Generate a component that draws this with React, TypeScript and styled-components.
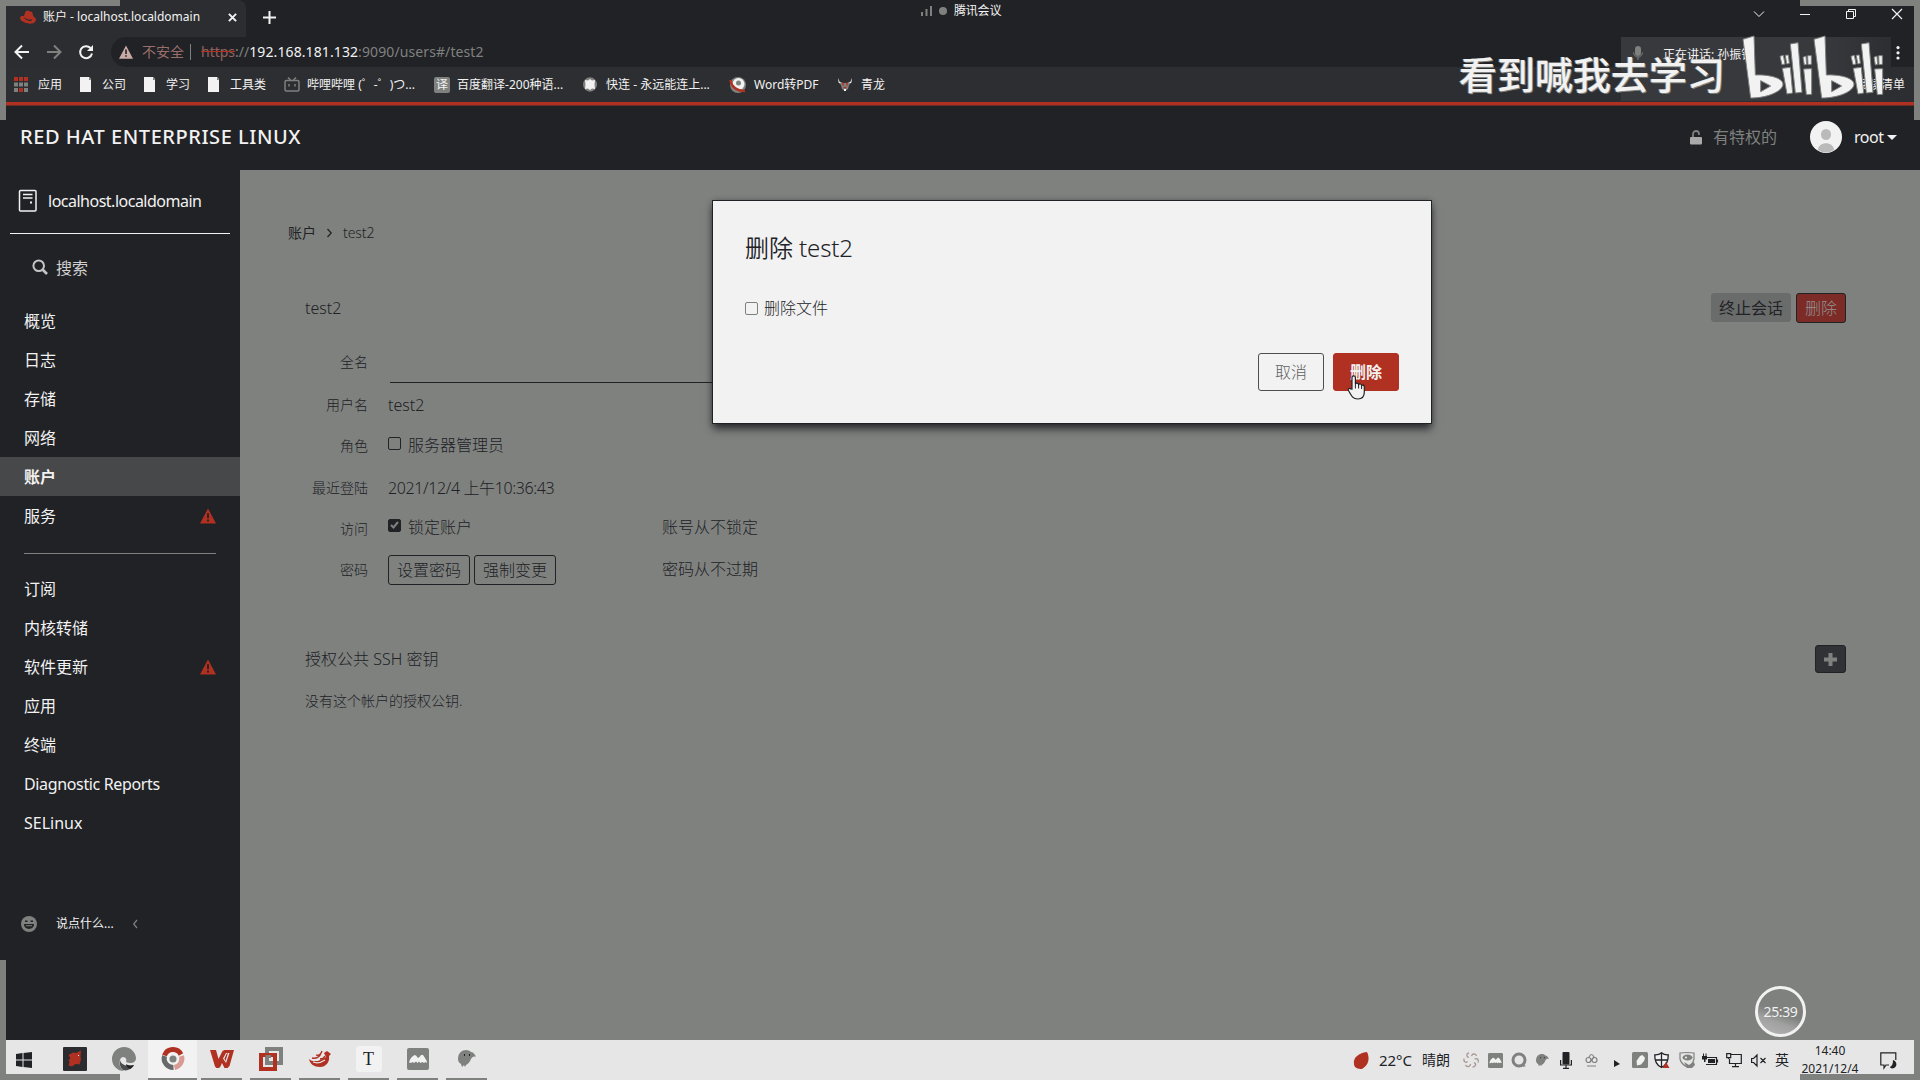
import React from "react";
import styled, { createGlobalStyle } from "styled-components";

const ink = "#212226";
const gray = "#7f817f";
const paper = "#f2f2f2";
const red = "#b03022";

const Global = createGlobalStyle`
  * { box-sizing: border-box; }
  body { margin: 0; overflow: hidden; background: ${ink}; }
`;

const Screen = styled.div`
  position: relative;
  width: 1920px;
  height: 1080px;
  overflow: hidden;
  display: flex;
  flex-direction: column;
  background: ${ink};
  color: ${paper};
  font-family: "Noto Sans", "Noto Sans CJK SC", sans-serif;
  font-size: 16px;
  line-height: 1;
  white-space: nowrap;
`;

const Label = styled.span<{ $size?: number; $color?: string; $weight?: number; $ls?: number; $strike?: boolean }>`
  display: inline-block;
  flex: none;
  line-height: 20px;
  font-size: ${(p) => p.$size ?? 12}px;
  font-weight: ${(p) => p.$weight ?? 400};
  color: ${(p) => p.$color ?? "inherit"};
  letter-spacing: ${(p) => p.$ls ?? 0}px;
  text-decoration: ${(p) => (p.$strike ? `line-through ${red}` : "none")};
`;

const Svg = styled.svg`
  display: block;
  flex: none;
  overflow: visible;
`;

/* ---------- browser window ---------- */

const TabStrip = styled.div`
  height: 37px;
  flex: none;
  display: flex;
  padding-left: 6px;
`;

const Tab = styled.div`
  width: 240px;
  display: flex;
  align-items: center;
  padding: 0 9px 3px 14px;
  gap: 7px;
  background: #2c2d30;
  border-radius: 0 8px 0 0;
`;

const TabTitle = styled(Label)`
  flex: 1;
`;

const NewTab = styled.div`
  padding: 11px 0 0 17px;
  flex: 1;
`;

const WindowButtons = styled.div`
  display: flex;
  gap: 36px;
  padding: 9px 18px 0 0;
`;

const Toolbar = styled.div`
  height: 30px;
  flex: none;
  display: flex;
  align-items: center;
  padding-left: 14px;
  background: #2c2d30;
`;

const NavIcons = styled.div`
  display: flex;
  width: 97px;
  gap: 16px;
`;

const AddressBar = styled.div`
  flex: 1;
  height: 30px;
  display: flex;
  align-items: center;
  padding-left: 8px;
  border-radius: 15px 0 0 15px;
  background: ${ink};
`;

const AddressNote = styled(Label)`
  margin-left: 9px;
`;

const AddressDivider = styled.div`
  width: 1px;
  height: 16px;
  margin: 0 10px 0 6px;
  background: ${gray};
`;

const Bookmarks = styled.div`
  height: 35px;
  flex: none;
  display: flex;
  align-items: center;
  gap: 18px;
  padding-left: 14px;
  background: #2d2e31;
`;

const Bookmark = styled.div<{ $gap?: number; $w?: number }>`
  display: flex;
  align-items: center;
  gap: ${(p) => p.$gap ?? 9}px;
  width: ${(p) => (p.$w ? `${p.$w}px` : "auto")};
`;

const RedRule = styled.div`
  height: 4px;
  flex: none;
  background: ${red};
  border-bottom: 1px solid #6b2a26;
`;

/* ---------- cockpit page ---------- */

const PageHeader = styled.header`
  height: 64px;
  flex: none;
  display: flex;
  align-items: center;
  padding: 0 23px 2px 20px;
`;

const Brand = styled(Label)`
  flex: 1;
`;

const Privileged = styled.div`
  display: flex;
  align-items: center;
  gap: 10px;
  margin-right: 33px;
`;

const RootMenu = styled.div`
  width: 43px;
  display: flex;
  align-items: center;
  justify-content: space-between;
  margin-left: 12px;
`;

const Body = styled.div`
  height: 870px;
  flex: none;
  display: flex;
`;

const Sidebar = styled.nav`
  width: 240px;
  flex: none;
  display: flex;
  flex-direction: column;
`;

const Host = styled.div`
  height: 64px;
  margin: 0 10px;
  padding: 0 0 1px 8px;
  display: flex;
  align-items: center;
  gap: 10px;
  border-bottom: 1px solid ${paper};
`;

const Search = styled.div`
  height: 67px;
  padding: 1px 0 0 32px;
  display: flex;
  align-items: center;
  gap: 8px;
`;

const NavItem = styled.div<{ $active?: boolean }>`
  height: 39px;
  padding: 0 24px;
  display: flex;
  align-items: center;
  justify-content: space-between;
  background: ${(p) => (p.$active ? "#46484a" : "transparent")};
`;

const NavRule = styled.hr`
  border: 0;
  width: 192px;
  height: 1px;
  margin: 18px 24px 15px;
  background: ${gray};
`;

const Chat = styled.div`
  margin-top: 72px;
  padding-left: 21px;
  display: flex;
  align-items: center;
`;

const ChatText = styled(Label)`
  margin: 0 19px;
`;

const Main = styled.main`
  flex: 1;
  background: ${gray};
  color: ${ink};
  padding: 53px 74px 0 48px;
`;

const Breadcrumb = styled.div`
  height: 20px;
  display: flex;
  align-items: center;
  gap: 11px;
`;

const TitleRow = styled.div<{ $top: number }>`
  margin: ${(p) => p.$top}px 0 0 17px;
  height: 32px;
  display: flex;
  align-items: center;
`;

const TitleText = styled(Label)`
  flex: 1;
`;

const Details = styled.div`
  margin-top: 18px;
`;

const DetailRow = styled.div<{ $shift?: number }>`
  height: 41.5px;
  padding-top: ${(p) => Math.max(0, p.$shift ?? 0)}px;
  display: grid;
  grid-template-columns: 80px 254px 1fr;
  column-gap: 20px;
  align-items: center;
`;

const FieldName = styled(Label)`
  text-align: right;
`;

const Field = styled.div<{ $gap?: number; $lift?: number }>`
  display: flex;
  align-items: center;
  gap: ${(p) => p.$gap ?? 7}px;
  padding-bottom: ${(p) => p.$lift ?? 0}px;
`;

const TextInput = styled.div`
  grid-column: 2 / 4;
  width: 700px;
  height: 41px;
  margin-left: 2px;
  border-bottom: 1px solid ${ink};
`;

const Check = styled.span<{ $checked?: boolean; $light?: boolean; $lift?: number }>`
  width: 13px;
  height: 13px;
  flex: none;
  margin-bottom: ${(p) => p.$lift ?? 0}px;
  display: grid;
  place-items: center;
  border: 1px solid ${(p) => (p.$light ? gray : ink)};
  border-radius: 2px;
  background: ${(p) => (p.$checked ? ink : "transparent")};
`;

const Button = styled.button<{ $bg?: string; $fg?: string; $line?: string; $w: number; $h: number; $weight?: number }>`
  width: ${(p) => p.$w}px;
  height: ${(p) => p.$h}px;
  padding: 0 0 2px;
  display: flex;
  align-items: center;
  justify-content: center;
  border: 1px solid ${(p) => p.$line ?? ink};
  border-radius: 3px;
  background: ${(p) => p.$bg ?? "transparent"};
  color: ${(p) => p.$fg ?? ink};
  font-family: inherit;
  font-size: 16px;
  font-weight: ${(p) => p.$weight ?? 300};
`;

const IconButton = styled(Button)`
  padding: 0;
`;

const ButtonPair = styled.div<{ $gap: number }>`
  display: flex;
  gap: ${(p) => p.$gap}px;
`;

const EmptyNote = styled.div`
  margin: 16px 0 0 17px;
`;

const Modal = styled.div`
  position: absolute;
  left: 713px;
  top: 201px;
  width: 718px;
  height: 222px;
  padding: 32px;
  display: flex;
  flex-direction: column;
  background: ${paper};
  color: ${ink};
  box-shadow: 0 0 0 1px ${ink}, 0 6px 8px rgba(20, 20, 24, 0.75), 0 0 6px rgba(20, 20, 24, 0.4);
`;

const ModalTitle = styled.h1`
  margin: 0;
  height: 30px;
  line-height: 30px;
  font-size: 24px;
  font-weight: 350;
  letter-spacing: -0.1px;
`;

const ModalOption = styled.label`
  margin-top: 35px;
  display: flex;
  align-items: center;
  gap: 6px;
`;

const ModalFooter = styled.div`
  margin-top: auto;
  display: flex;
  justify-content: flex-end;
  gap: 9px;
`;

/* ---------- taskbar ---------- */

const Taskbar = styled.div`
  height: 40px;
  flex: none;
  display: flex;
  padding-right: 6px;
  background: #e6e6e6;
  color: ${ink};
`;

const StartSlot = styled.div`
  width: 50px;
  display: flex;
  align-items: center;
  padding-left: 16px;
`;

const TaskApp = styled.div<{ $open?: boolean; $active?: boolean }>`
  width: ${(p) => (p.$open && !p.$active ? 41 : 49)}px;
  margin: 0 ${(p) => (p.$open && !p.$active ? 4 : 0)}px;
  display: flex;
  align-items: center;
  justify-content: center;
  background: ${(p) => (p.$active ? paper : "transparent")};
  border-bottom: 2px solid ${(p) => (p.$open ? gray : "transparent")};
  background-clip: padding-box;
`;

const Tray = styled.div`
  margin-left: auto;
  display: flex;
  align-items: center;
`;

const Weather = styled(Label)`
  margin-left: 10px;
`;

const TrayIcons = styled.div`
  display: flex;
  align-items: center;
  margin-left: 9px;
`;

const TraySlot = styled.div<{ $w?: number }>`
  width: ${(p) => p.$w ?? 24}px;
  display: flex;
  justify-content: center;
`;

const Clock = styled.div`
  width: 66px;
  margin-left: 3px;
  display: flex;
  flex-direction: column;
  align-items: center;
`;

const ClockLine = styled.span`
  font-size: 12px;
  line-height: 18px;
`;

/* ---------- overlays ---------- */

const Corner = styled.div<{ $x: "left" | "right"; $y: "top" | "bottom" }>`
  position: absolute;
  ${(p) => p.$x}: 0;
  ${(p) => p.$y}: 0;
  width: 120px;
  height: 120px;
  border: 0 solid ${gray};
  border-${(p) => p.$x}-width: 6px;
  border-${(p) => p.$y}-width: 6px;
`;

const Float = styled.div<{ $left: number; $top: number }>`
  position: absolute;
  left: ${(p) => p.$left}px;
  top: ${(p) => p.$top}px;
  display: flex;
  align-items: center;
`;

const MeetingTitle = styled(Float)`
  gap: 7px;
`;

const SpeakerPanel = styled(Float)`
  width: 270px;
  height: 64px;
  align-items: flex-start;
  padding: 8px 0 0 12px;
  gap: 20px;
  background: linear-gradient(90deg, #38393c 75%, #2d2e31);
`;

const Watermark = styled(Label)`
  line-height: 44px;
  text-shadow: 1px 1px 0 ${gray}, -1px 0 0 ${gray};
`;

const Timer = styled(Float)`
  width: 51px;
  height: 51px;
  justify-content: center;
  border: 3px solid ${paper};
  border-radius: 50%;
  background: linear-gradient(20deg, #b4b5b4 0%, #a0a1a0 30%, ${gray} 48%);
`;

/* ---------- drawings ---------- */

const FedoraHat = () => (
  <Svg width="16" height="16" viewBox="0 0 16 16">
    <path fill={red} d="M4 7 5.500 2.500 7.500 1.500l2 .8L12 3l1.500 4.500 2 1.500.5 2.500-2 2.500-4 .8-5-1L1 11.500 0 9l1-2z" />
    <path fill="#2c2d30" d="M3.500 7.500c2 2.500 5 3.300 8.500 3l-.5 1.500C8 12 4.500 10.500 3.500 7.500z" />
  </Svg>
);

const Warning = ({ size = 16, fill = red, mark = ink }: { size?: number; fill?: string; mark?: string }) => (
  <Svg width={size} height={size} viewBox="0 0 16 16">
    <path fill={fill} d="M8 0.600 16 15.600H0z" />
    <path stroke={mark} strokeWidth="1.800" d="M8 5.200v5M8 11.600v1.800" />
  </Svg>
);

const Back = () => (
  <Svg width="16" height="16" viewBox="0 0 16 16" fill="none" stroke={paper} strokeWidth="2">
    <path d="M15 8H2M8 1.500 1.500 8 8 14.500" />
  </Svg>
);

const Forward = () => (
  <Svg width="16" height="16" viewBox="0 0 16 16" fill="none" stroke={gray} strokeWidth="2">
    <path d="M1 8h13M8 1.500 14.500 8 8 14.500" />
  </Svg>
);

const Reload = () => (
  <Svg width="16" height="16" viewBox="0 0 16 16">
    <path d="M12.500 4A6 6 0 1 0 14 9.500" fill="none" stroke={paper} strokeWidth="2" />
    <path d="M15 1v6H9z" fill={paper} />
  </Svg>
);

const AppsGrid = () => (
  <Svg width="14" height="15" viewBox="0 0 14 15">
    {[0, 1, 2].map((r) =>
      [0, 1, 2].map((c) => (
        <rect key={`${r}${c}`} x={c * 5} y={r * 5.5} width="4" height="4" fill={r === 0 || (r === 2 && c === 1) ? red : gray} />
      )),
    )}
  </Svg>
);

const PageDoc = () => (
  <Svg width="12" height="15" viewBox="0 0 12 15">
    <path fill={paper} d="M0 0h9l2 2v13H0z" />
    <path fill={gray} d="M9 0l2.500 3H9z" />
  </Svg>
);

const TvIcon = () => (
  <Svg width="16" height="15" viewBox="0 0 16 15" fill="none" stroke={gray} strokeWidth="1.500">
    <rect x="1" y="3.500" width="14" height="10.500" rx="1.500" />
    <path d="M4 .5 6.500 3M12 .5 9.500 3M5 7v2.500M11 7v2.500" />
  </Svg>
);

const TranslateBox = styled.span`
  width: 16px;
  height: 16px;
  display: grid;
  place-items: center;
  border-radius: 2px;
  background: ${gray};
  color: ${paper};
  font-size: 12px;
`;

const Knot = () => (
  <Svg width="14" height="15" viewBox="0 0 14 15">
    <ellipse cx="7" cy="7.500" rx="7" ry="7.200" fill={gray} />
    <path fill={paper} d="M2 3l3 .5L7 2l2 1.500L12 3l-.5 4.500L12 12l-3-.5L7 13l-2-1.500L2 12l.5-4.500z" />
  </Svg>
);

const WordPdf = () => (
  <Svg width="16" height="16" viewBox="0 0 16 16">
    <circle cx="8" cy="8" r="8" fill={gray} />
    <circle cx="8.500" cy="7" r="6" fill={paper} />
    <circle cx="8.500" cy="6" r="2.500" fill={gray} />
    <path d="M.5 3C1 9 6 14 15 14" stroke={red} strokeWidth="2.500" fill="none" />
  </Svg>
);

const Dragon = () => (
  <Svg width="14" height="13" viewBox="0 0 14 13">
    <path fill={gray} d="M0 0l2 4 3 1h4l3-1 2-4v4l-3 3-1 4-3 2-3-2-1-4-3-3z" />
    <path fill={paper} d="M0 0l1.500 4L4 5 1 5zM14 0l-1.500 4L10 5l3 0zM6 11h2v2H6z" />
    <path stroke={red} strokeWidth="1.500" d="M5 4.500v3M9 4.500v3M5.500 9.500h3" />
  </Svg>
);

const ServerIcon = () => (
  <Svg width="20" height="24" viewBox="0 0 20 24" fill="none" stroke={paper} strokeWidth="1.500">
    <rect x="1.500" y="1.500" width="16.500" height="20.500" rx="1" />
    <path d="M5 5.500h9.500M5 9h9.500" />
    <path d="M12 13.500h2" strokeWidth="2" />
  </Svg>
);

const SearchIcon = () => (
  <Svg width="16" height="16" viewBox="0 0 16 16" fill="none" stroke="#c4c5c4" strokeWidth="2">
    <circle cx="6.700" cy="5.700" r="5.300" />
    <path d="M10.500 9.500 15 14" strokeWidth="2.600" />
  </Svg>
);

const Lock = () => (
  <Svg width="13" height="15" viewBox="0 0 13 15">
    <path d="M3 7V4a3 3 0 0 1 6 0v1" stroke={gray} strokeWidth="1.800" fill="none" />
    <rect x="0" y="7" width="12" height="7.500" rx="1" fill="#a8a9a8" />
  </Svg>
);

const Avatar = () => (
  <Svg width="32" height="32" viewBox="0 0 32 32">
    <circle cx="16" cy="16" r="16" fill={paper} />
    <ellipse cx="16" cy="13.500" rx="5" ry="5.500" fill="#b9bab9" />
    <path fill="#b9bab9" d="M8 29c0-9 16-9 16 0q-8 5-16 0z" />
  </Svg>
);

const Smile = () => (
  <Svg width="16" height="16" viewBox="0 0 16 16">
    <circle cx="8" cy="8" r="8" fill={gray} />
    <path fill={ink} d="M3 8h10c0 6.500-10 6.500-10 0zM4 4.500h2.500V6H4zM9.500 4.500H12V6H9.500z" />
    <path fill={gray} d="M5 9.200h6v1H5z" />
  </Svg>
);

const Bilibili = () => (
  <Svg width="165" height="75" viewBox="0 0 495 225">
    <g stroke={gray} strokeWidth="3" fill={paper} strokeLinejoin="round">
      {[0, 213].map((dx) => (
        <g key={dx} transform={`translate(${dx} 0)`}>
          <path
            fillRule="evenodd"
            d="M39 28 72 18l4 117c38-2 82 8 83 27 0 22-46 42-97 42zM92 152v33l30-17z"
          />
          <path d="M181 42l23-4 12 149-20 2zM157 115l24-3 7 77-17 3zM221 117l24-1v77l-16 1z" />
          <path d="M150 79l10-3 5 26-9 2zM166 76l9-1 3 25-8 2zM219 82l9-4 2 25-7 2zM233 77h11v26l-10 1z" />
        </g>
      ))}
    </g>
  </Svg>
);

const HandCursor = () => (
  <Svg width="18" height="25" viewBox="0 0 18 25">
    <path
      d="M5 14V2.500a1.700 1.700 0 0 1 3.400 0V9c.4-1.400 3-1.200 3.200.6.6-1.100 2.800-.8 3 .9.800-.9 2.700-.4 2.700 1.300v5.500c0 4-2 6.700-6.500 6.700-5 0-6.300-3-9.300-8.500-1-2 1-2.800 2-1.600z"
      fill={paper}
      stroke={ink}
      strokeWidth="1.200"
    />
    <path d="M8.400 9v4.500M11.600 10v3.500M14.600 11v3" stroke={ink} strokeWidth="1" />
  </Svg>
);

const Windows = () => (
  <Svg width="16" height="16" viewBox="0 0 16 16" fill={ink}>
    <path d="M0 2l6.500-1v6.500H0zM7.500.9 16 0v7.500H7.500zM0 8.500h6.500V15L0 14zM7.500 8.500H16V16l-8.500-1z" />
  </Svg>
);

const SublimeIcon = () => (
  <Svg width="24" height="24" viewBox="0 0 24 24">
    <rect width="24" height="24" rx="1" fill="#2b2c30" />
    <path fill={red} d="M5.500 8 10 5.500l3 .5 5-2.500-.5 6 .5 3-1.500 5-4-.5L9 19.500l-3.500-1 1-3.500-1-2 2-1.500z" />
    <path fill={paper} d="M15 8h1v1h-1z" />
  </Svg>
);

const Edge = () => (
  <Svg width="24" height="24" viewBox="0 0 24 24">
    <path fill={gray} d="M12 0a12 12 0 0 1 12 11c0 4-3 5-6 5-3 0-4-1-4-2 1-1 0-4-3-4-5 1-5 10 1 14A12 12 0 0 1 12 0z" />
    <path fill="#4a4c4e" d="M8 12c0 5 5 8 14 6-3 5-9 7-12 4-2-2-3-6-2-10z" />
    <path fill={ink} d="M14 17c2 1.500 5 2 8 1-1 2-3 3.500-4 4-2-1-4-3-4-5z" />
  </Svg>
);

const Chrome = () => (
  <Svg width="22" height="22" viewBox="0 0 22 22" fill="none" strokeWidth="5">
    <path d="M2.500 7.500a9 9 0 0 1 16.500-1" stroke={red} />
    <path d="M19.500 8a9 9 0 0 1-7 11.500" stroke="#d99a93" />
    <path d="M2.500 8a9 9 0 0 0 9 11.500" stroke="#66686a" />
    <circle cx="11" cy="11" r="4.300" fill={gray} stroke={paper} strokeWidth="1.500" />
  </Svg>
);

const Wps = () => (
  <Svg width="24" height="18" viewBox="0 0 24 18">
    <path fill={red} d="M0 0h6l2.500 9L12.500 1l2-1H24l-4.500 16-2 2h-3L12 13l-1.500 3.500L9 18H6.500L5 16.500z" />
    <path fill="#e6e6e6" d="M13 8.500 16 3h3.500L16 13z" />
    <path fill={red} d="M14.500 8.500 16.500 4 18 3l-2.500 8z" />
  </Svg>
);

const VmWare = () => (
  <Svg width="24" height="24" viewBox="0 0 24 24" fill="none" strokeWidth="4">
    <rect x="8" y="2" width="14" height="14" stroke={gray} />
    <rect x="2" y="8" width="14" height="14" stroke={red} />
    <path d="M8 12V9.500h4" stroke={gray} strokeWidth="3" />
  </Svg>
);

const Swirl = () => (
  <Svg width="22" height="18" viewBox="0 0 22 18">
    <path fill={red} d="M0 9c3 3 6 2 9 2l8-4-2-4 3-2 4 3-2 2c1 6-3 11-9 11C5 17 1 14 0 9z" />
    <path fill="none" stroke={red} strokeWidth="1.300" d="M3 8c4 1 8-1 9-5M7 5c3 1 5-1 6-4M11 9c2 0 4-1 5-3" />
    <path fill="none" stroke="#e6e6e6" strokeWidth="1.200" d="M4 12c5 2 9 0 12-2" />
  </Svg>
);

const TyporaBox = styled.span`
  width: 26px;
  height: 26px;
  display: grid;
  place-items: center;
  border-radius: 3px;
  background: ${paper};
  font-family: "Liberation Serif", serif;
  font-size: 18px;
`;

const Mountain = ({ size = 22 }: { size?: number }) => (
  <Svg width={size} height={size} viewBox="0 0 22 22">
    <rect width="22" height="22" rx="2" fill={gray} />
    <path
      fill={paper}
      d="M2 15c.5-3 2-5.500 3.500-6.500L7.500 7l1.500.5 2 2.500 2-1.500L14 7h2l2 3c1 1.500 2 3 2 5l-1.500-1-1.500 1-1.500-1-2 1-1.500-1.500L10.500 15 9 13.500 7 15l-1.500-1L4 15l-1-.5z"
    />
  </Svg>
);

const Bird = ({ size = 18 }: { size?: number }) => (
  <Svg width={size} height={size} viewBox="0 0 18 18">
    <path fill={gray} d="M0 9C0 3 4 0 8 0c3 0 4 1 5 2 2 0 4 2 5 5-2-1-4 0-5 2-1 3-3 5-5 6l-1 2-1-2-2 2-1-3C1 13 0 11 0 9z" />
    <path fill={ink} d="M6 4h1v2H6zM11 4h1v2h-1z" />
  </Svg>
);

const tray = {
  weather: (
    <Svg width="16" height="17" viewBox="0 0 16 17">
      <path fill={red} d="M1 12C0 6 5 1 14 0c3 6 2 13-5 17-4 0-8-1-8-5z" />
    </Svg>
  ),
  flower: (
    <Svg width="16" height="16" viewBox="0 0 16 16" fill="none" stroke="#a5928f" strokeWidth="1.200">
      <path d="M6 5.500C3 5 3 1.500 6 .8M8.500 4C9.500 1 13 1.500 13.500 4M11.500 7c3-1.500 4.500 1 3.500 3.500M11 10.500c3 1.500 1.500 4.500-1.500 4.700M7.500 12c-.5 3.500-4 3-5 1M4.500 9.500C2 11.500.5 9 1 6.500" />
    </Svg>
  ),
  ring: (
    <Svg width="16" height="16" viewBox="0 0 16 16">
      <circle cx="8" cy="8" r="6" fill="none" stroke={gray} strokeWidth="3" />
      <path fill={gray} d="M11 12l4 2-3 1z" />
    </Svg>
  ),
  mic: (
    <Svg width="12" height="17" viewBox="0 0 12 17">
      <rect x="2.500" width="7" height="12.500" rx="1" fill={ink} />
      <path d="M.6 8v5h10.800V8M6 13v3.500M3 16.300h6" stroke={ink} strokeWidth="1.200" fill="none" />
    </Svg>
  ),
  cloud: (
    <Svg width="13" height="14" viewBox="0 0 13 14" fill="none" stroke={gray} strokeWidth="1.200">
      <circle cx="3.500" cy="7" r="2.500" />
      <circle cx="9.500" cy="7" r="2.500" />
      <path d="M4 4q2.500-5 5 0L5 9M2 13h9" />
    </Svg>
  ),
  pointer: (
    <Svg width="6" height="13" viewBox="0 0 6 13">
      <path fill={ink} d="M0 6l6 4-6 3z" />
    </Svg>
  ),
  penBox: (
    <Svg width="16" height="16" viewBox="0 0 16 16">
      <rect width="16" height="16" rx="1.500" fill={gray} />
      <path fill={paper} d="M4.500 9 8 4l2.500-1L13 6l-1 3-3 3.500-4 1z" />
    </Svg>
  ),
  shield: (
    <Svg width="16" height="17" viewBox="0 0 16 17">
      <path
        d="M7.500.8Q10 3 14.200 2.800C14.500 9 12 13.500 7.500 15.500 3 13.500.5 9 .8 2.800 5 3 7.500.8 7.500.8zM7.500 1v14M1 8h13"
        fill={paper}
        stroke={ink}
        strokeWidth="1.300"
      />
      <path fill={red} d="M12 10l3.500 6h-7z" />
    </Svg>
  ),
  face: (
    <Svg width="16" height="16" viewBox="0 0 16 16">
      <path d="M1 1q7-1 14 0v6c-1 4-3 7-7 8-4-2-6-4-7-8z" fill="none" stroke={gray} strokeWidth="1.200" />
      <ellipse cx="8.500" cy="5.500" rx="5" ry="3" fill={gray} />
      <path fill={gray} d="M5 10l5 3 5-3 1 3-3 3H8z" />
      <circle cx="7" cy="5.500" r="1" fill={paper} />
    </Svg>
  ),
  battery: (
    <Svg width="16" height="14" viewBox="0 0 16 14">
      <path d="M5 4.500h9.500v7H4M15.500 6.500v3" stroke={ink} fill="none" strokeWidth="1.200" />
      <path fill={ink} d="M6 6h7v4H6zM0 3h5v3.500H3.500V9H2V6.500H0zM1 .5h1V3H1zM3.500.5h1V3h-1z" />
    </Svg>
  ),
  monitor: (
    <Svg width="16" height="15" viewBox="0 0 16 15" fill="none" stroke={ink} strokeWidth="1.200">
      <path d="M5 1.500h10.300v9H3.500V6M9.500 10.500v3M6 13.700h7" />
      <path d="M.7.7h4v4h-4zM2.700 4.700V6" />
    </Svg>
  ),
  muted: (
    <Svg width="15" height="13" viewBox="0 0 15 13" fill="none" stroke={ink} strokeWidth="1.200">
      <path d="M.6 4.500h2L6 1v11L2.600 8.500h-2zM9.500 4l5 5M14.500 4l-5 5" />
    </Svg>
  ),
  notes: (
    <Svg width="17" height="17" viewBox="0 0 17 17">
      <path d="M9 13H6l-2 3v-3H.8V.8h15V8" fill="none" stroke={ink} strokeWidth="1.200" />
      <path fill={ink} d="M13 8c3 1 4 4 3 6-1 3-6 3-6 1 2-1 3-3 3-7z" />
    </Svg>
  ),
};

interface NavEntryData {
  t: string;
  active?: boolean;
  warn?: boolean;
  ls?: number;
}

const navTop: NavEntryData[] = [
  { t: "概览" },
  { t: "日志" },
  { t: "存储" },
  { t: "网络" },
  { t: "账户", active: true },
  { t: "服务", warn: true },
];
const navBottom: NavEntryData[] = [
  { t: "订阅" },
  { t: "内核转储" },
  { t: "软件更新", warn: true },
  { t: "应用" },
  { t: "终端" },
  { t: "Diagnostic Reports", ls: -0.35 },
  { t: "SELinux" },
];

const NavEntry = ({ item }: { item: NavEntryData }) => (
  <NavItem $active={item.active}>
    <Label $size={16} $weight={item.active ? 700 : 400} $ls={item.ls}>
      {item.t}
    </Label>
    {item.warn && <Warning />}
  </NavItem>
);

export default function App() {
  return (
    <Screen>
      <Global />

      <TabStrip>
        <Tab>
          <FedoraHat />
          <TabTitle $size={12}>账户 - localhost.localdomain</TabTitle>
          <Svg width="9" height="9" viewBox="0 0 10 10" stroke={paper} strokeWidth="2.200">
            <path d="M1 1l8 8M9 1 1 9" />
          </Svg>
        </Tab>
        <NewTab>
          <Svg width="13" height="13" viewBox="0 0 13 13" stroke={paper} strokeWidth="2">
            <path d="M6.500 0v13M0 6.500h13" />
          </Svg>
        </NewTab>
        <WindowButtons>
          <Svg width="10" height="10" viewBox="0 0 10 10" fill="none" stroke={paper}>
            <path d="M0 2.500 5 7.500l5-5" />
          </Svg>
          <Svg width="10" height="10" viewBox="0 0 10 10" stroke={paper}>
            <path d="M0 5.500h10" />
          </Svg>
          <Svg width="10" height="10" viewBox="0 0 10 10" fill="none" stroke={paper}>
            <path d="M.5 2.500h7v7h-7zM2.500 2.500v-2h7v7h-2" />
          </Svg>
          <Svg width="10" height="10" viewBox="0 0 10 10" stroke={paper} strokeWidth="1.200">
            <path d="M0 0l10 10M10 0 0 10" />
          </Svg>
        </WindowButtons>
      </TabStrip>

      <Toolbar>
        <NavIcons>
          <Back />
          <Forward />
          <Reload />
        </NavIcons>
        <AddressBar>
          <Warning size={14} fill="#c9aaa6" mark={ink} />
          <AddressNote $size={14} $color="#9a6f6b">
            不安全
          </AddressNote>
          <AddressDivider />
          <Label $size={14} $color="#93625d" $strike>
            https
          </Label>
          <Label $size={14} $color={gray}>
            ://
          </Label>
          <Label $size={14} $ls={0.1}>
            192.168.181.132
          </Label>
          <Label $size={14} $color={gray} $ls={0.1}>
            :9090/users#/test2
          </Label>
        </AddressBar>
      </Toolbar>

      <Bookmarks>
        <Bookmark $gap={10}>
          <AppsGrid />
          <Label>应用</Label>
        </Bookmark>
        <Bookmark $gap={10}>
          <PageDoc />
          <Label>公司</Label>
        </Bookmark>
        <Bookmark $gap={10}>
          <PageDoc />
          <Label>学习</Label>
        </Bookmark>
        <Bookmark $gap={10}>
          <PageDoc />
          <Label>工具类</Label>
        </Bookmark>
        <Bookmark $w={132} $gap={7}>
          <TvIcon />
          <Label>哔哩哔哩 (゜-゜)つ...</Label>
        </Bookmark>
        <Bookmark $w={131} $gap={7}>
          <TranslateBox>译</TranslateBox>
          <Label>百度翻译-200种语...</Label>
        </Bookmark>
        <Bookmark $w={129}>
          <Knot />
          <Label>快连 - 永远能连上...</Label>
        </Bookmark>
        <Bookmark $w={90} $gap={8}>
          <WordPdf />
          <Label>Word转PDF</Label>
        </Bookmark>
        <Bookmark>
          <Dragon />
          <Label>青龙</Label>
        </Bookmark>
      </Bookmarks>
      <RedRule />

      <PageHeader>
        <Brand $size={20} $weight={500} $ls={0.55}>
          RED HAT ENTERPRISE LINUX
        </Brand>
        <Privileged>
          <Lock />
          <Label $size={16} $color={gray}>
            有特权的
          </Label>
        </Privileged>
        <Avatar />
        <RootMenu>
          <Label $size={16} $ls={-0.5}>
            root
          </Label>
          <Svg width="10" height="5" viewBox="0 0 10 5">
            <path fill={paper} d="M0 0h10L5 5z" />
          </Svg>
        </RootMenu>
      </PageHeader>

      <Body>
        <Sidebar>
          <Host>
            <ServerIcon />
            <Label $size={16} $ls={-0.5}>
              localhost.localdomain
            </Label>
          </Host>
          <Search>
            <SearchIcon />
            <Label $size={16} $color="#d0d0d0">
              搜索
            </Label>
          </Search>
          {navTop.map((n) => (
            <NavEntry key={n.t} item={n} />
          ))}
          <NavRule />
          {navBottom.map((n) => (
            <NavEntry key={n.t} item={n} />
          ))}
          <Chat>
            <Smile />
            <ChatText $size={12}>说点什么...</ChatText>
            <Svg width="4" height="8" viewBox="0 0 4 8" fill="none" stroke={gray} strokeWidth="1.200">
              <path d="M4 0 .7 4 4 8" />
            </Svg>
          </Chat>
        </Sidebar>

        <Main>
          <Breadcrumb>
            <Label $size={14}>账户</Label>
            <Svg width="5" height="8" viewBox="0 0 5 8" fill="none" stroke={ink} strokeWidth="1.200">
              <path d="M.5 0 4.200 4 .5 8" />
            </Svg>
            <Label $size={14} $weight={300} $ls={-0.1}>
              test2
            </Label>
          </Breadcrumb>

          <TitleRow $top={49}>
            <TitleText $size={16} $weight={300}>
              test2
            </TitleText>
            <ButtonPair $gap={5}>
              <Button $w={80} $h={29} $bg="#6a6c6b" $line="#6a6c6b" $weight={400}>
                终止会话
              </Button>
              <Button $w={50} $h={30} $bg="#7c2b27" $fg="#929492">
                删除
              </Button>
            </ButtonPair>
          </TitleRow>

          <Details>
            <DetailRow>
              <Field $lift={2}>
                <LongName $size={14} $weight={300}>
                  全名
                </LongName>
              </Field>
              <TextInput />
            </DetailRow>
            <DetailRow $shift={2}>
              <FieldName $size={14} $weight={300}>
                用户名
              </FieldName>
              <Label $size={16} $weight={300}>
                test2
              </Label>
            </DetailRow>
            <DetailRow $shift={1}>
              <FieldName $size={14} $weight={300}>
                角色
              </FieldName>
              <Field $lift={3}>
                <Check $lift={3} />
                <Label $size={16} $weight={300}>
                  服务器管理员
                </Label>
              </Field>
            </DetailRow>
            <DetailRow $shift={1}>
              <FieldName $size={14} $weight={300}>
                最近登陆
              </FieldName>
              <Label $size={16} $weight={300} $ls={-0.38}>
                2021/12/4 上午10:36:43
              </Label>
            </DetailRow>
            <DetailRow>
              <FieldName $size={14} $weight={300}>
                访问
              </FieldName>
              <Field $lift={4}>
                <Check $checked $lift={3}>
                  <Svg width="9" height="8" viewBox="0 0 9 8" fill="none" stroke={gray} strokeWidth="2">
                    <path d="M1 4l2.500 2.500L8 1" />
                  </Svg>
                </Check>
                <Label $size={16} $weight={300}>
                  锁定账户
                </Label>
              </Field>
              <Field $lift={4}>
                <Label $size={16} $weight={300}>
                  账号从不锁定
                </Label>
              </Field>
            </DetailRow>
            <DetailRow>
              <FieldName $size={14} $weight={300}>
                密码
              </FieldName>
              <Field $gap={4}>
                <Button $w={82} $h={30}>
                  设置密码
                </Button>
                <Button $w={82} $h={30}>
                  强制变更
                </Button>
              </Field>
              <Field $lift={3}>
                <Label $size={16} $weight={300}>
                  密码从不过期
                </Label>
              </Field>
            </DetailRow>
          </Details>

          <TitleRow $top={52}>
            <TitleText $size={16} $weight={300}>
              授权公共 SSH 密钥
            </TitleText>
            <IconButton $w={31} $h={28} $bg="#313236">
              <Svg width="13" height="13" viewBox="0 0 13 13" stroke={gray} strokeWidth="4">
                <path d="M6.500 0v13M0 6.500h13" />
              </Svg>
            </IconButton>
          </TitleRow>
          <EmptyNote>
            <Label $size={14} $weight={300}>
              没有这个帐户的授权公钥.
            </Label>
          </EmptyNote>
        </Main>
      </Body>

      <Taskbar>
        <StartSlot>
          <Windows />
        </StartSlot>
        <TaskApp>
          <SublimeIcon />
        </TaskApp>
        <TaskApp>
          <Edge />
        </TaskApp>
        <TaskApp $open $active>
          <Chrome />
        </TaskApp>
        <TaskApp $open>
          <Wps />
        </TaskApp>
        <TaskApp $open>
          <VmWare />
        </TaskApp>
        <TaskApp $open>
          <Swirl />
        </TaskApp>
        <TaskApp $open>
          <TyporaBox>T</TyporaBox>
        </TaskApp>
        <TaskApp $open>
          <Mountain />
        </TaskApp>
        <TaskApp $open>
          <Bird />
        </TaskApp>
        <Tray>
          {tray.weather}
          <Weather $size={15}>22°C</Weather>
          <Weather $size={14}>晴朗</Weather>
          <TrayIcons>
            <TraySlot>{tray.flower}</TraySlot>
            <TraySlot>
              <Mountain size={15} />
            </TraySlot>
            <TraySlot>{tray.ring}</TraySlot>
            <TraySlot $w={22}>
              <Bird size={13} />
            </TraySlot>
            <TraySlot $w={26}>{tray.mic}</TraySlot>
            <TraySlot>{tray.cloud}</TraySlot>
            <TraySlot $w={28}>{tray.pointer}</TraySlot>
            <TraySlot $w={17}>{tray.penBox}</TraySlot>
            <TraySlot $w={28}>{tray.shield}</TraySlot>
            <TraySlot $w={22}>{tray.face}</TraySlot>
            <TraySlot>{tray.battery}</TraySlot>
            <TraySlot>{tray.monitor}</TraySlot>
            <TraySlot>{tray.muted}</TraySlot>
            <TraySlot>
              <Label $size={14}>英</Label>
            </TraySlot>
          </TrayIcons>
          <Clock>
            <ClockLine>14:40</ClockLine>
            <ClockLine>2021/12/4</ClockLine>
          </Clock>
          <TraySlot $w={51}>{tray.notes}</TraySlot>
        </Tray>
      </Taskbar>

      <MeetingTitle $left={921} $top={1}>
        <Svg width="11" height="10" viewBox="0 0 11 10" stroke={gray} strokeWidth="2">
          <path d="M1 10V6M5.500 10V3M10 10V0" />
        </Svg>
        <Svg width="8" height="8" viewBox="0 0 8 8">
          <circle cx="4" cy="4" r="4" fill={gray} />
        </Svg>
        <Label $size={12} $ls={-0.2}>
          腾讯会议
        </Label>
      </MeetingTitle>

      <SpeakerPanel $left={1621} $top={37}>
        <Svg width="10" height="16" viewBox="0 0 10 14">
          <rect x="2" width="6" height="10" rx="3" fill={gray} />
          <path d="M.6 6.500C1 12.500 9 12.500 9.400 6.500M5 11v3" stroke={gray} fill="none" />
        </Svg>
        <Label $size={12}>正在讲话: 孙振锴</Label>
      </SpeakerPanel>
      <Float $left={1896} $top={46}>
        <Svg width="4" height="14" viewBox="0 0 4 14" fill={paper}>
          <circle cx="2" cy="1.600" r="1.600" />
          <circle cx="2" cy="6.800" r="1.600" />
          <circle cx="2" cy="12" r="1.600" />
        </Svg>
      </Float>
      <Float $left={1459} $top={52}>
        <Watermark $size={38} $weight={500}>
          看到喊我去学习
        </Watermark>
      </Float>
      <Float $left={1857} $top={75}>
        <Label $size={12}>阅读清单</Label>
      </Float>
      <Float $left={1730} $top={30}>
        <Bilibili />
      </Float>

      <Modal>
        <ModalTitle>删除 test2</ModalTitle>
        <ModalOption>
          <Check $light />
          <Label $size={16} $weight={300}>
            删除文件
          </Label>
        </ModalOption>
        <ModalFooter>
          <Button $w={66} $h={38} $fg="#5d5f60" $line="#4c4e50">
            取消
          </Button>
          <Button $w={66} $h={38} $bg={red} $line={red} $fg={paper} $weight={700}>
            删除
          </Button>
        </ModalFooter>
      </Modal>

      <Float $left={1347} $top={375}>
        <HandCursor />
      </Float>

      <Timer $left={1755} $top={986}>
        <Label $size={14} $ls={-0.4}>
          25:39
        </Label>
      </Timer>

      <Corner $x="left" $y="top" />
      <Corner $x="right" $y="top" />
      <Corner $x="left" $y="bottom" />
      <Corner $x="right" $y="bottom" />
    </Screen>
  );
}

const LongName = styled(FieldName)`
  width: 80px;
`;
